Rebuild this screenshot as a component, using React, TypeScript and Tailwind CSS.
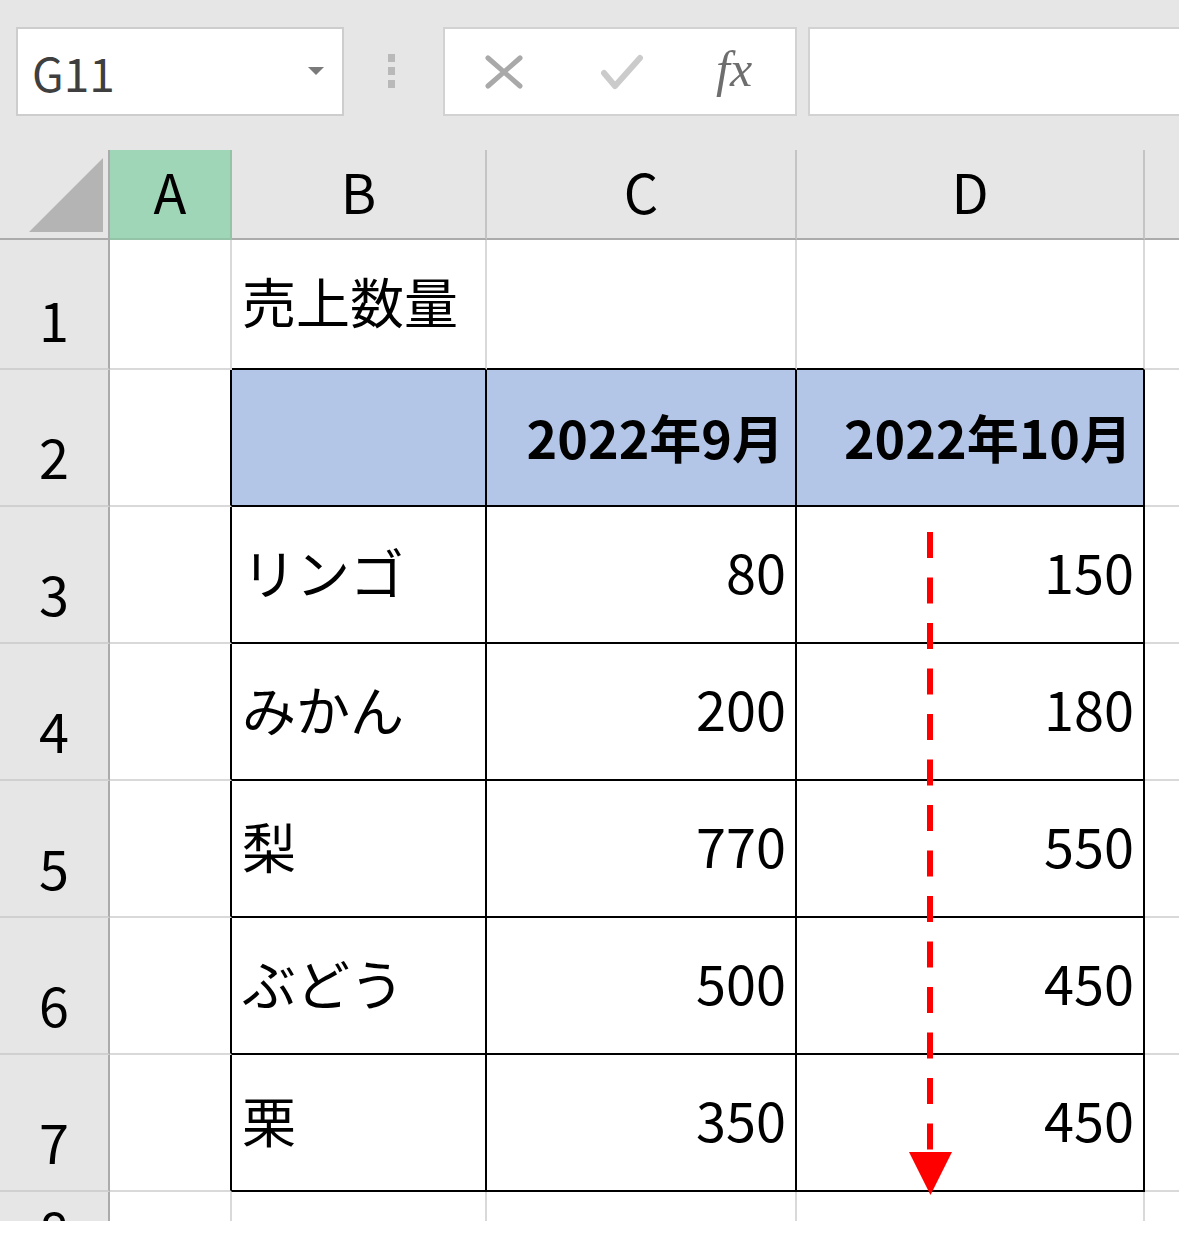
import React from "react";

type Row = {
  n: string;
  h: string;
  b?: string;
  c?: string;
  d?: string;
  head?: boolean;
};

const rows: Row[] = [
  { n: "1", h: "h-[130px]", b: "売上数量" },
  { n: "2", h: "h-[137px]", head: true, c: "2022年9月", d: "2022年10月" },
  { n: "3", h: "h-[137px]", b: "リンゴ", c: "80", d: "150" },
  { n: "4", h: "h-[137px]", b: "みかん", c: "200", d: "180" },
  { n: "5", h: "h-[137px]", b: "梨", c: "770", d: "550" },
  { n: "6", h: "h-[137px]", b: "ぶどう", c: "500", d: "450" },
  { n: "7", h: "h-[137px]", b: "栗", c: "350", d: "450" },
];

function Toolbar() {
  return (
    <div className="flex items-start h-[150px] bg-[#e6e6e6] pt-[27px] pl-[16px]">
      <div className="w-[328px] h-[89px] bg-white border-2 border-[#cdcdcd] flex items-center justify-between pl-[14px] pr-[18px]">
        <span className="text-[46px] leading-none text-[#3f3f3f]">G11</span>
        <svg width="16" height="9" viewBox="0 0 16 9">
          <polygon points="0,0 16,0 8,8" fill="#7a7a7a" />
        </svg>
      </div>
      <div className="w-[99px] pl-[44px] pt-[27px] flex flex-col gap-[5px]">
        <div className="w-[7px] h-[8px] bg-[#b9b9b9]" />
        <div className="w-[7px] h-[8px] bg-[#b9b9b9]" />
        <div className="w-[7px] h-[8px] bg-[#b9b9b9]" />
      </div>
      <div className="w-[354px] h-[89px] bg-white border-2 border-[#d2d2d2] flex items-center pl-[40px]">
        <svg width="38" height="34" viewBox="0 0 38 34">
          <path d="M3 3 L35 31 M35 3 L3 31" stroke="#a9a9a9" strokeWidth="5" strokeLinecap="round" fill="none" />
        </svg>
        <svg className="ml-[78px]" width="42" height="36" viewBox="0 0 42 36">
          <path d="M3 19 L14 32 L39 4" stroke="#cbcbcb" strokeWidth="6" strokeLinecap="round" strokeLinejoin="round" fill="none" />
        </svg>
        <span className="ml-[73px] font-['Liberation_Serif',serif] italic text-[50px] leading-none text-[#6e6e6e] -mt-[6px]">
          fx
        </span>
      </div>
      <div className="ml-[11px] flex-1 h-[89px] bg-white border-2 border-r-0 border-[#d2d2d2]" />
    </div>
  );
}

function ColumnHeaders() {
  return (
    <div className="flex h-[90px] bg-[#e6e6e6] text-[54px] leading-none text-black">
      <div className="w-[110px] border-b-2 border-b-[#ababab] border-r-2 border-r-[#ababab] flex items-end justify-end pr-[5px] pb-[6px]">
        <svg width="74" height="74" viewBox="0 0 74 74">
          <polygon points="0,74 74,74 74,0" fill="#b4b4b4" />
        </svg>
      </div>
      <div className="w-[122px] bg-[#a0d6b8] border-b-2 border-b-[#93c4a8] border-r-2 border-r-[#93c4a8] flex items-center justify-center pb-[6px]">
        A
      </div>
      <div className="w-[255px] border-b-2 border-b-[#ababab] border-r-2 border-r-[#c4c4c4] flex items-center justify-center pb-[6px]">
        B
      </div>
      <div className="w-[310px] border-b-2 border-b-[#ababab] border-r-2 border-r-[#c4c4c4] flex items-center justify-center pb-[6px]">
        C
      </div>
      <div className="w-[348px] border-b-2 border-b-[#ababab] border-r-2 border-r-[#c4c4c4] flex items-center justify-center pb-[6px]">
        D
      </div>
      <div className="flex-1 border-b-2 border-b-[#ababab]" />
    </div>
  );
}

function DataRow({ row, i }: { row: Row; i: number }) {
  const inTable = i >= 1;
  const edge = inTable ? "border-r-black" : "border-r-[#d9d9d9]";
  const fill = row.head ? "bg-[#b4c6e7] font-bold text-[52px]" : "bg-white";
  const numPad = row.head ? "pr-[11px] pb-[2px]" : "pr-[9px] pb-[8px]";

  return (
    <div className={`flex ${row.h} text-[54px] leading-none text-black`}>
      <div className="w-[110px] bg-[#e6e6e6] border-r-2 border-r-[#ababab] border-b-2 border-b-[#d0d0d0] flex items-end justify-center pb-[22px]">
        {row.n}
      </div>
      <div className={`w-[122px] border-r-2 ${edge} border-b-2 border-b-[#d9d9d9]`} />
      <div className={`w-[255px] border-r-2 ${edge} border-b-2 border-b-black ${fill} flex items-center pl-[10px] pb-[6px]`}>
        {row.b}
      </div>
      <div className={`w-[310px] border-r-2 ${edge} border-b-2 border-b-black ${fill} flex items-center justify-end ${numPad}`}>
        {row.c}
      </div>
      <div className={`w-[348px] border-r-2 ${edge} border-b-2 border-b-black ${fill} flex items-center justify-end ${numPad}`}>
        {row.d}
      </div>
      <div className="flex-1 border-b-2 border-b-[#d9d9d9]" />
    </div>
  );
}

function PartialRow() {
  return (
    <div className="flex h-[29px] overflow-hidden text-[54px] leading-none text-black">
      <div className="w-[110px] bg-[#e6e6e6] border-r-2 border-r-[#ababab] flex items-start justify-center pt-[10px]">
        8
      </div>
      <div className="w-[122px] border-r-2 border-r-[#d9d9d9]" />
      <div className="w-[255px] border-r-2 border-r-[#d9d9d9]" />
      <div className="w-[310px] border-r-2 border-r-[#d9d9d9]" />
      <div className="w-[348px] border-r-2 border-r-[#d9d9d9]" />
      <div className="flex-1" />
    </div>
  );
}

function Arrow() {
  return (
    <svg
      className="absolute left-[905px] top-[532px]"
      width="50"
      height="664"
      viewBox="0 0 50 664"
    >
      <line x1="25" y1="0" x2="25" y2="618" stroke="#ff0000" strokeWidth="6" strokeDasharray="26 19.5" />
      <polygon points="4,620 47,620 25.5,663" fill="#ff0000" />
    </svg>
  );
}

export default function App() {
  return (
    <div className="relative w-[1179px] h-[1240px] overflow-hidden bg-white font-['Noto_Sans_CJK_JP',sans-serif]">
      <Toolbar />
      <ColumnHeaders />
      {rows.map((row, i) => (
        <DataRow key={row.n} row={row} i={i} />
      ))}
      <PartialRow />
      <Arrow />
    </div>
  );
}
